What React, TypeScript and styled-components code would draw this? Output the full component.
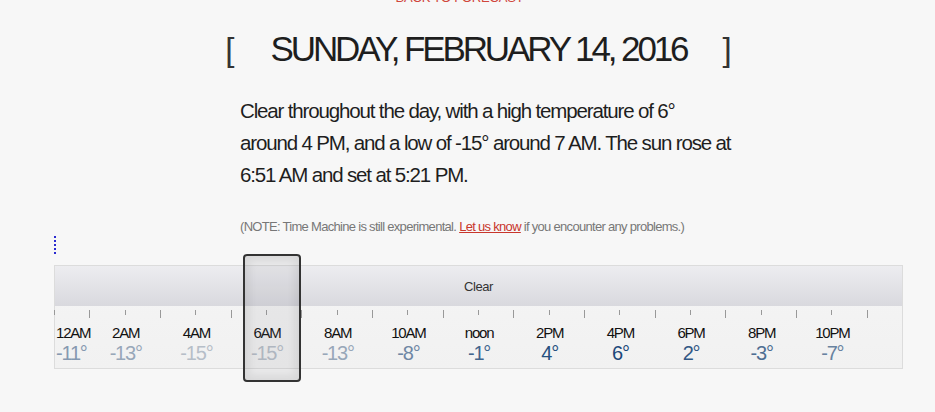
import styled, { createGlobalStyle } from 'styled-components';

const GlobalStyle = createGlobalStyle`
  html, body {
    margin: 0;
    padding: 0;
    background: #f7f7f7;
    overflow: hidden;
  }
  body {
    font-family: "Liberation Sans", Arial, sans-serif;
    color: #222;
  }
`;

const Page = styled.div`
  width: 849px;
  margin-left: 54px;
  height: 412px;
`;

const BackLink = styled.a`
  display: block;
  margin: -9px 0 0 0;
  padding-right: 38px;
  text-align: center;
  font-size: 13px;
  line-height: 14px;
  color: #d0463c;
  letter-spacing: -0.2px;
  text-decoration: none;
`;

const TitleRow = styled.h1`
  display: flex;
  justify-content: center;
  align-items: baseline;
  gap: 36px;
  margin: 24px 0 0 0;
  font-size: 35px;
  line-height: 40px;
  font-weight: normal;
  letter-spacing: -3.1px;
  color: #1e1e1e;
`;

const Bracket = styled.span`
  font-size: 33px;
  letter-spacing: 0;
  color: #333;
`;

const Summary = styled.p`
  width: 495px;
  margin: 25px 0 0 186px;
  font-size: 20.5px;
  line-height: 32px;
  letter-spacing: -1.15px;
  color: #1e1e1e;
`;

const Note = styled.p`
  margin: 28px 0 0 186px;
  font-size: 13px;
  line-height: 16px;
  letter-spacing: -0.7px;
  color: #777;
`;

const NoteLink = styled.a`
  color: #c8362c;
  text-decoration: underline;
`;

const FocusMark = styled.span`
  display: block;
  width: 0;
  height: 18px;
  margin-top: 1px;
  border-left: 2px dotted #2a2ad0;
`;

const Timeline = styled.div`
  position: relative;
  margin-top: 11px;
  height: 104px;
  border: 1px solid #dcdcdc;
  box-sizing: border-box;
  background: linear-gradient(#f5f5f5, #f1f1f1);
`;

const Band = styled.div`
  height: 40px;
  display: flex;
  align-items: center;
  justify-content: center;
  font-size: 13px;
  letter-spacing: -0.4px;
  color: #333;
  background: linear-gradient(#ededf0, #d9d9de);
`;

const TickRow = styled.div`
  display: grid;
  grid-template-columns: repeat(24, 1fr);
  height: 17px;
  margin-left: -1px;
`;

const Tick = styled.div<{ $long: boolean }>`
  position: relative;
  &::before {
    content: '';
    position: absolute;
    left: 0;
    top: 4px;
    width: 1px;
    height: ${p => (p.$long ? '8px' : '5px')};
    background: #999;
  }
`;

const HourGrid = styled.div`
  display: grid;
  grid-template-columns: 1fr repeat(11, 2fr) 1fr;
  margin-left: -1px;
  margin-right: -1px;
`;

const HourCell = styled.div<{ $first: boolean }>`
  display: flex;
  flex-direction: column;
  align-items: ${p => (p.$first ? 'flex-start' : 'center')};
  padding-left: ${p => (p.$first ? '2px' : '0')};
  white-space: nowrap;
`;

const HourLabel = styled.span`
  font-size: 15px;
  line-height: 19px;
  letter-spacing: -1.2px;
  color: #111;
`;

const Temp = styled.span`
  font-size: 20px;
  line-height: 22px;
  letter-spacing: -1.2px;
`;

const Selection = styled.div`
  position: absolute;
  left: 188px;
  top: -12px;
  width: 58px;
  height: 128px;
  box-sizing: border-box;
  border: 2px solid #333;
  border-radius: 4px;
  background: rgba(120, 120, 125, 0.1);
  box-shadow: inset 0 0 8px 4px rgba(0, 0, 0, 0.08);
`;

const hours = [
  { label: '12AM', t: -11 },
  { label: '2AM', t: -13 },
  { label: '4AM', t: -15 },
  { label: '6AM', t: -15 },
  { label: '8AM', t: -13 },
  { label: '10AM', t: -8 },
  { label: 'noon', t: -1 },
  { label: '2PM', t: 4 },
  { label: '4PM', t: 6 },
  { label: '6PM', t: 2 },
  { label: '8PM', t: -3 },
  { label: '10PM', t: -7 },
];

// cold temps fade to pale grey, warm ones go deep blue
const tempColor = (t: number) => {
  const k = Math.min(1, Math.max(0, (t + 15) / 21));
  const cold = [182, 190, 200];
  const warm = [28, 72, 122];
  const c = cold.map((v, i) => Math.round(v + (warm[i] - v) * Math.pow(k, 0.7)));
  return `rgb(${c[0]}, ${c[1]}, ${c[2]})`;
};

export default function App() {
  return (
    <>
      <GlobalStyle />
      <Page>
        <BackLink href="#">BACK TO FORECAST</BackLink>
        <TitleRow>
          <Bracket>[</Bracket>
          <span>SUNDAY, FEBRUARY 14, 2016</span>
          <Bracket>]</Bracket>
        </TitleRow>
        <Summary>
          Clear throughout the day, with a high temperature of 6° around 4 PM, and a low of -15°
          around 7 AM. The sun rose at 6:51 AM and set at 5:21 PM.
        </Summary>
        <Note>
          (NOTE: Time Machine is still experimental. <NoteLink href="#">Let us know</NoteLink> if you
          encounter any problems.)
        </Note>
        <FocusMark />
        <Timeline>
          <Band>Clear</Band>
          <TickRow>
            {Array.from({ length: 24 }, (_, h) => (
              <Tick key={h} $long={h % 2 === 1} />
            ))}
          </TickRow>
          <HourGrid>
            {hours.map((h, i) => (
              <HourCell key={h.label} $first={i === 0}>
                <HourLabel>{h.label}</HourLabel>
                <Temp style={{ color: tempColor(h.t) }}>{h.t}°</Temp>
              </HourCell>
            ))}
          </HourGrid>
          <Selection />
        </Timeline>
      </Page>
    </>
  );
}
